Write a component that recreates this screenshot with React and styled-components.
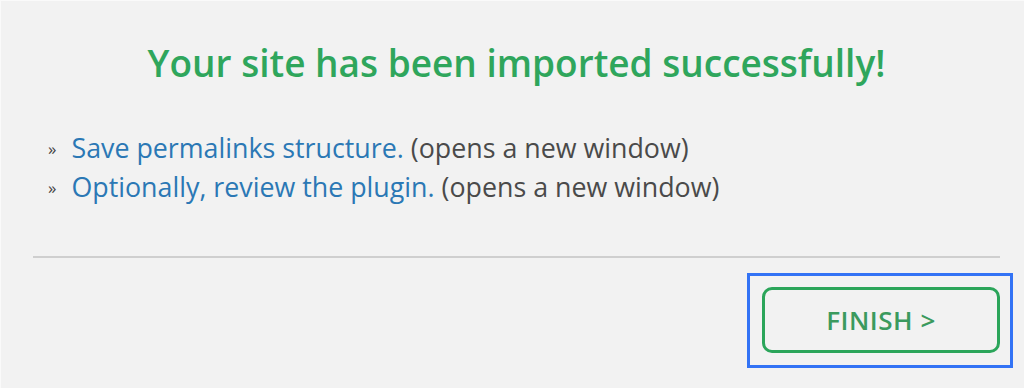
import React from 'react';
import styled, { createGlobalStyle } from 'styled-components';

const GlobalStyle = createGlobalStyle`
  html, body {
    margin: 0;
    padding: 0;
    background: #f3f3f3;
  }
  body {
    font-family: "Open Sans", "Noto Sans", "Liberation Sans", sans-serif;
  }
`;

const Wizard = styled.div`
  box-sizing: border-box;
  width: 1024px;
  height: 388px;
  padding: 0 24px 0 32px;
  background: #f2f2f2;
  border-top: 1px solid #fafafa;
  border-left: 1px solid #fafafa;
  overflow: hidden;
`;

const Title = styled.h2`
  margin: 0;
  padding-top: 37px;
  text-align: center;
  font-size: 37px;
  font-weight: 600;
  line-height: 50px;
  color: #2fa65c;
`;

const Steps = styled.ul`
  list-style: none;
  margin: 0;
  padding: 41px 0 0 15px;
`;

const Step = styled.li`
  font-size: 26.8px;
  line-height: 38px;
  color: #4a4a4a;

  &::before {
    content: "»";
    font-size: 17px;
    margin-right: 15px;
    vertical-align: 3px;
    color: #444;
  }
`;

const Link = styled.a`
  color: #2b78b5;
  text-decoration: none;
`;

const Divider = styled.hr`
  margin: 49px 0 0;
  border: 0;
  height: 2px;
  background: #cfcfcf;
`;

const Footer = styled.div`
  display: flex;
  justify-content: flex-end;
  padding-top: 15px;
  margin-right: -13px;
`;

const FocusFrame = styled.div`
  display: flex;
  padding: 11px 10px 12px 12px;
  border: 3px solid #3373f5;
`;

const FinishButton = styled.button`
  box-sizing: border-box;
  width: 238px;
  height: 66px;
  border: 3px solid #2ba55a;
  border-radius: 10px;
  background: transparent;
  color: #3b9a5e;
  font-family: inherit;
  font-size: 26px;
  font-weight: 600;
  letter-spacing: 0.5px;
  outline: none;
  cursor: pointer;
`;

export default function App() {
  return (
    <>
      <GlobalStyle />
      <Wizard>
        <Title>Your site has been imported successfully!</Title>
        <Steps>
          <Step>
            <Link href="#">Save permalinks structure.</Link> (opens a new window)
          </Step>
          <Step>
            <Link href="#">Optionally, review the plugin.</Link> (opens a new window)
          </Step>
        </Steps>
        <Divider />
        <Footer>
          <FocusFrame>
            <FinishButton>FINISH &gt;</FinishButton>
          </FocusFrame>
        </Footer>
      </Wizard>
    </>
  );
}
